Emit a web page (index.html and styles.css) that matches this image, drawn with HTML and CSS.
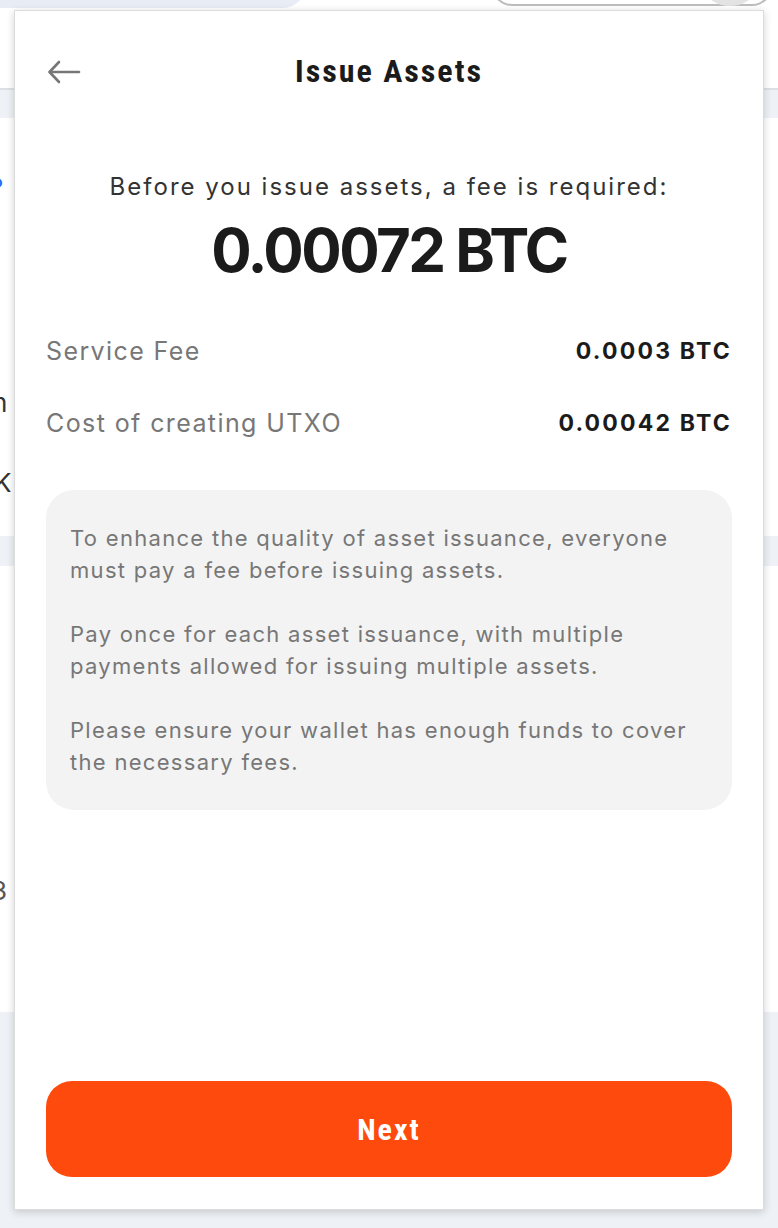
FILE: index.html
```html
<!DOCTYPE html>
<html lang="en">
<head>
    <meta charset="UTF-8">
    <meta name="viewport" content="width=device-width, initial-scale=1.0">
    <title>Issue Assets</title>
    <link rel="stylesheet" href="styles.css">
</head>
<body>
<div class="page">
    <div class="page-top">
        <div class="tab"></div>
        <div class="tab-search"></div>
        <div class="tab-avatar"></div>
    </div>
    <div class="page-band"></div>
    <div class="page-body">
        <div class="frag frag-blue">?</div>
        <div class="frag frag-n">n</div>
        <div class="frag frag-k">K</div>
        <div class="page-band small"></div>
        <div class="frag frag-3">3</div>
    </div>
    <div class="page-foot"></div>
</div>

<div class="popup">
    <div class="popup-header">
        <button class="back-btn" aria-label="Back">
            <svg width="34" height="24" viewBox="0 0 34 24" fill="none" stroke="#777" stroke-width="2.6" stroke-linecap="round" stroke-linejoin="round">
                <path d="M32 12H3"/>
                <path d="M12 2L2.5 12L12 22"/>
            </svg>
        </button>
        <h1 class="popup-title">Issue Assets</h1>
    </div>

    <div class="fee-summary">
        <p class="fee-lead">Before you issue assets, a fee is required:</p>
        <p class="fee-total">0.00072 BTC</p>
    </div>

    <div class="fee-rows">
        <div class="fee-row">
            <span class="fee-label">Service Fee</span>
            <span class="fee-value">0.0003 BTC</span>
        </div>
        <div class="fee-row">
            <span class="fee-label">Cost of creating UTXO</span>
            <span class="fee-value">0.00042 BTC</span>
        </div>
    </div>

    <div class="info-box">
        <p>To enhance the quality of asset issuance, everyone must pay a fee before issuing assets.</p>
        <p>Pay once for each asset issuance, with multiple payments allowed for issuing multiple assets.</p>
        <p>Please ensure your wallet has enough funds to cover the necessary fees.</p>
    </div>

    <button class="next-btn">Next</button>
</div>
</body>
</html>
```

FILE: styles.css
```css
* {
    box-sizing: border-box;
}

body {
    margin: 0;
    width: 778px;
    height: 1228px;
    overflow: hidden;
    background: #fff;
    font-family: Inter, "Noto Sans", sans-serif;
    position: relative;
}

/* page behind the popup */
.page {
    height: 100%;
    display: flex;
    flex-direction: column;
}

.page-top {
    height: 88px;
    position: relative;
    background: #fff;
}

.tab {
    position: absolute;
    left: 0;
    top: -20px;
    width: 305px;
    height: 28px;
    background: #e8edf5;
    border-radius: 0 0 22px 0;
}

.tab-search {
    position: absolute;
    left: 492px;
    top: -30px;
    width: 280px;
    height: 36px;
    border: 2px solid #bdbdbd;
    border-top: none;
    border-radius: 0 0 20px 20px;
}

.tab-avatar {
    position: absolute;
    left: 705px;
    top: -30px;
    width: 50px;
    height: 36px;
    background: #e3e3e3;
    border-radius: 50%;
}

.page-band {
    height: 30px;
    background: #eef2f6;
    border-top: 2px solid #dde1e5;
}

.page-band.small {
    margin-top: 53px;
    height: 30px;
    border-top: none;
}

.page-body {
    flex: 1;
    font-size: 26px;
    color: #333;
}

.frag {
    height: 0;
    line-height: 0;
    margin-left: -8px;
}

.frag-blue {
    color: #2f6bff;
    margin-top: 70px;
    margin-left: -10px;
}

.frag-n {
    margin-top: 215px;
}

.frag-k {
    margin-top: 80px;
    margin-left: -6px;
}

.frag-3 {
    margin-top: 325px;
    color: #555;
    margin-left: -9px;
}

.page-foot {
    height: 216px;
    background: #eef2f6;
}

/* popup window */
.popup {
    position: absolute;
    left: 14px;
    top: 10px;
    width: 750px;
    height: 1200px;
    background: #fff;
    border: 1px solid #dcdcdc;
    box-shadow: 0 2px 8px rgba(0, 0, 0, 0.18);
    padding: 0 31px 32px;
    display: flex;
    flex-direction: column;
}

.popup-header {
    height: 122px;
    display: flex;
    align-items: center;
    justify-content: center;
    position: relative;
}

.back-btn {
    position: absolute;
    left: 1px;
    top: 49px;
    padding: 0;
    border: none;
    background: none;
    cursor: pointer;
    display: flex;
}

.popup-title {
    margin: 0 0 2px;
    font-family: "Liberation Sans Narrow", "Roboto Condensed", Roboto, sans-serif;
    font-size: 32px;
    font-weight: 700;
    color: #1b1b1b;
    letter-spacing: 2px;
}

.fee-summary {
    margin-top: 38px;
    text-align: center;
}

.fee-lead {
    margin: 0;
    font-size: 24px;
    line-height: 32px;
    color: #333;
    letter-spacing: 2px;
}

.fee-total {
    margin: 15px 0 0;
    font-size: 60px;
    line-height: 64px;
    font-weight: 700;
    color: #1b1b1b;
    letter-spacing: -2.5px;
}

.fee-rows {
    margin-top: 53px;
    display: flex;
    flex-direction: column;
    gap: 40px;
}

.fee-row {
    display: flex;
    justify-content: space-between;
    align-items: center;
    line-height: 32px;
}

.fee-label {
    font-size: 25px;
    color: #777;
    letter-spacing: 1.4px;
}

.fee-value {
    font-size: 23px;
    font-weight: 700;
    color: #1b1b1b;
    letter-spacing: 2.2px;
}

.info-box {
    margin-top: 51px;
    background: #f3f3f3;
    border-radius: 28px;
    padding: 32px 24px;
    font-size: 22px;
    line-height: 32px;
    color: #777;
    letter-spacing: 1.3px;
}

.info-box p {
    margin: 0 0 32px;
}

.info-box p:last-child {
    margin-bottom: 0;
}

.next-btn {
    margin-top: auto;
    height: 96px;
    width: 100%;
    border: none;
    border-radius: 26px;
    background: #ff4a0e;
    color: #fff;
    font-family: "Liberation Sans Narrow", "Roboto Condensed", Roboto, sans-serif;
    font-size: 30px;
    font-weight: 700;
    letter-spacing: 2px;
    cursor: pointer;
}
```
